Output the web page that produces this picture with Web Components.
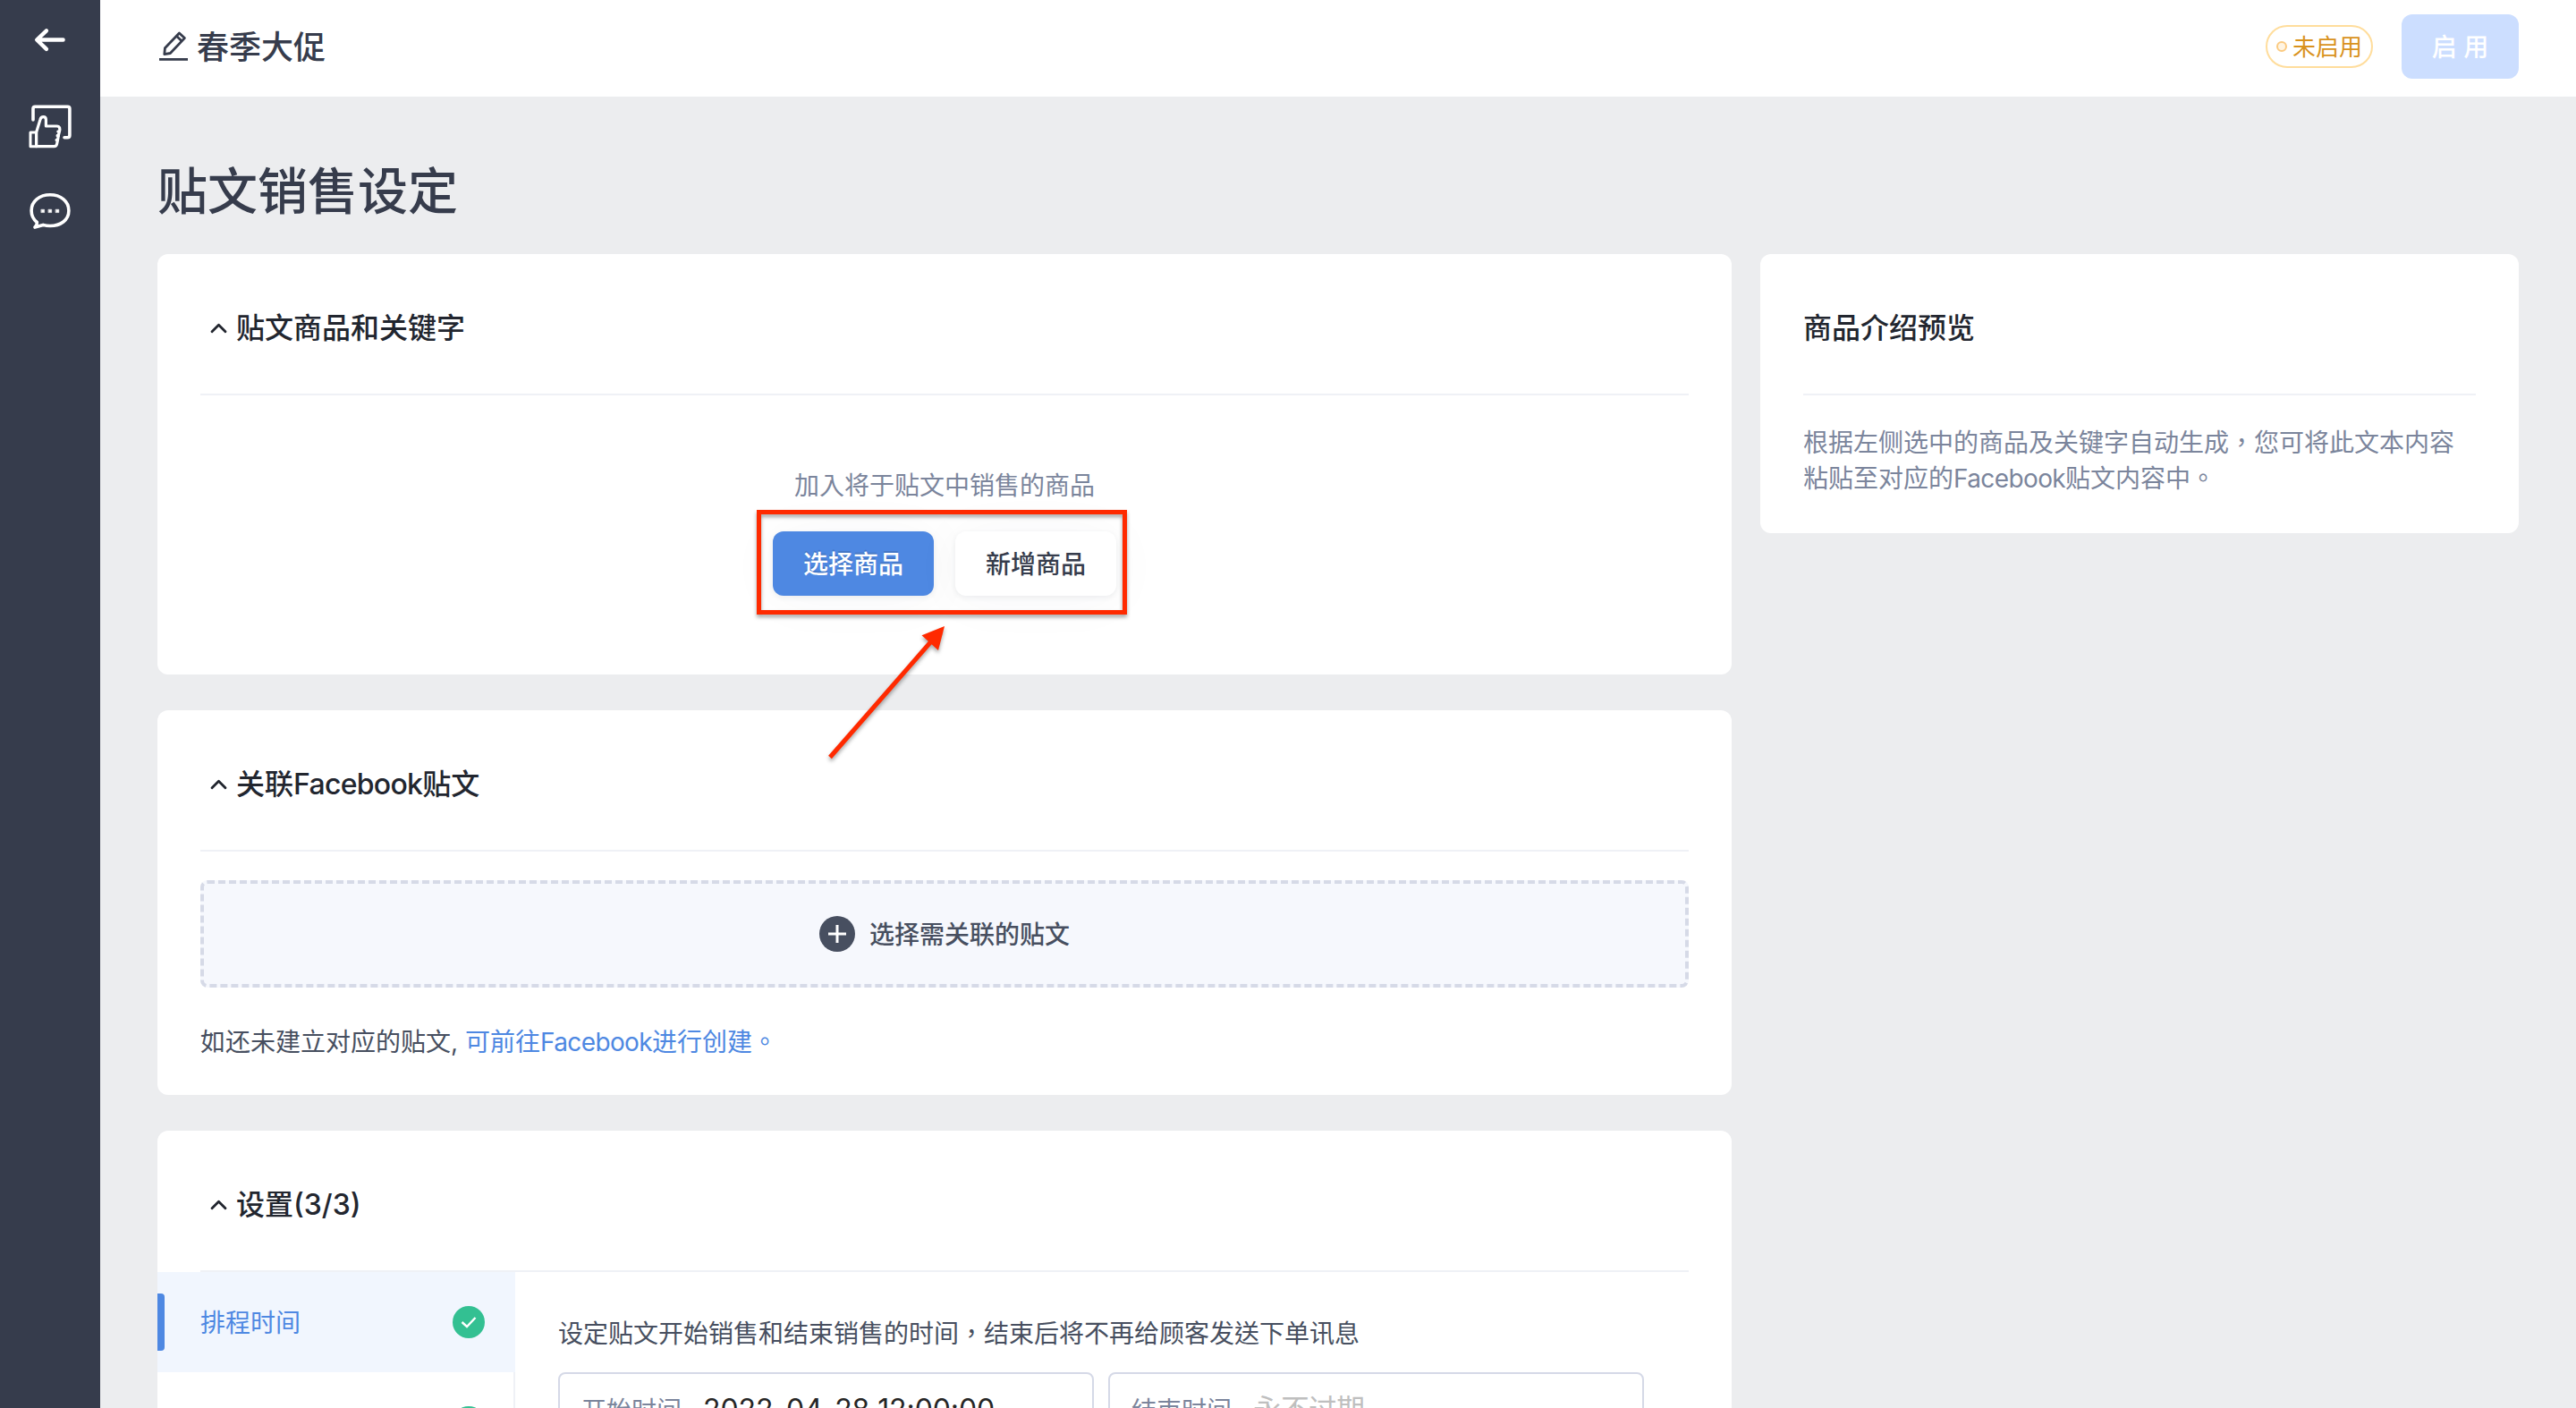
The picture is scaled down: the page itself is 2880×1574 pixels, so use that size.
<!DOCTYPE html>
<html lang="zh-Hant-TW">
<head>
<meta charset="utf-8">
<title>贴文销售设定</title>
<style>
  html, body {
    margin: 0;
    height: 100%;
    overflow: hidden;
  }

  body {
    font-family: Inter, "Noto Sans CJK TC", "Noto Sans CJK SC", sans-serif;
    font-size: 28px;
    line-height: 40px;
    color: #474f60;
    background: #ecedef;
  }
</style>
</head>
<body>
<sales-page>
  <side-bar slot="side"></side-bar>
  <top-bar slot="top" name="春季大促">
    <status-pill>未启用</status-pill>
    <app-button kind="disabled">启 用</app-button>
  </top-bar>
  <page-title>贴文销售设定</page-title>

  <panel-card collapsible style="height: 470px">
    <span slot="heading">贴文商品和关键字</span>
    <empty-products>
      加入将于贴文中销售的商品
      <app-button slot="actions" kind="primary">选择商品</app-button>
      <app-button slot="actions">新增商品</app-button>
    </empty-products>
  </panel-card>

  <panel-card collapsible style="height: 430px">
    <span slot="heading">关联<latin-text>Facebook</latin-text>贴文</span>
    <post-picker>
      选择需关联的贴文
      <span slot="hint">如还未建立对应的贴文,</span>
      <span slot="link">可前往<latin-text>Facebook</latin-text>进行创建。</span>
    </post-picker>
  </panel-card>

  <panel-card collapsible style="height: 560px">
    <span slot="heading">设置(3/3)</span>
    <settings-layout>
      <settings-tab slot="tabs" active>排程时间</settings-tab>
      <settings-tab slot="tabs"></settings-tab>
      设定贴文开始销售和结束销售的时间，结束后将不再给顾客发送下单讯息
      <time-field slot="fields" label="开始时间">2022-04-28 12:00:00</time-field>
      <time-field slot="fields" label="结束时间" empty>永不过期</time-field>
    </settings-layout>
  </panel-card>

  <panel-card slot="aside" style="height: 312px">
    <span slot="heading">商品介绍预览</span>
    <preview-text>根据左侧选中的商品及关键字自动生成，您可将此文本内容粘贴至对应的<latin-text>Facebook</latin-text>贴文内容中。</preview-text>
  </panel-card>
</sales-page>

<script>
// Attaches an open shadow root filled from a markup string
class BaseElement extends HTMLElement {
  constructor() {
    super();
    const template = document.createElement('template');
    template.innerHTML = this.render();
    this.attachShadow({ mode: 'open' });
    this.shadowRoot.appendChild(template.content.cloneNode(true));
  }
}

class SalesPage extends BaseElement {
  render() {
    return `
      <style>
        :host {
          display: grid;
          grid-template-columns: 112px 1fr;
          grid-template-rows: 108px 1fr;
          width: 2880px;
          height: 1574px;
          overflow: hidden;
        }
        .side { grid-row: 1 / 3; display: grid; }
        .content {
          display: grid;
          grid-template-columns: 1760px 848px;
          column-gap: 32px;
          padding: 0 64px;
          min-height: 0;
        }
        .main, .aside { display: flex; flex-direction: column; gap: 40px; }
        .aside { padding-top: 176px; }
      </style>
      <div class="side"><slot name="side"></slot></div>
      <slot name="top"></slot>
      <div class="content">
        <div class="main"><slot></slot></div>
        <div class="aside"><slot name="aside"></slot></div>
      </div>
    `;
  }
}

// Latin words inside Chinese text, set a little tighter
class LatinText extends BaseElement {
  render() {
    return `
      <style>
        :host { display: inline; letter-spacing: -.022em; }
      </style>
      <slot></slot>
    `.trim().replace(/>\s+</g, '><');
  }
}

class SideBar extends BaseElement {
  render() {
    return `
      <style>
        :host {
          display: flex;
          flex-direction: column;
          align-items: center;
          gap: 44px;
          padding-top: 28px;
          background: #363c4c;
        }
        svg {
          display: block;
          fill: none;
          stroke: #fff;
          stroke-linecap: round;
          stroke-linejoin: round;
        }
      </style>
      <svg width="48" height="40" viewBox="32 28 48 40" stroke-width="4.4">
        <path d="M70.6 44.5H42M51.9 34.3L41.2 44.5L51.9 54.9"/>
      </svg>
      <svg width="56" height="60" viewBox="28 112 56 60" stroke-width="3.6">
        <path d="M37 134V121.5Q37 119.3 39.2 119.3H75.6Q77.9 119.3 77.9 121.5V151.3Q77.9 153.8 75.4 153.8H72"/>
        <path d="M34 148H40.6V163.7H34Z" stroke-width="3"/>
        <path d="M40.6 163.7V148L45 133.5C46 129.7 51.4 129.7 51.4 133.8V141H63.5C67 141 67.3 144 66.4 147.2L65.4 151.2L64.4 157L63.6 161Q63 163.7 60.6 163.7Z" stroke-width="3.2"/>
        <path d="M66 147.3L64.8 147M65.4 151.8L64 151.6M64.5 156.8L63 156.5" stroke-width="3"/>
      </svg>
      <svg width="56" height="60" viewBox="28 216.8 56 60" stroke-width="3.6">
        <path d="M41.3 249.3C37.3 246 35.1 241.5 35.1 236.3C35.1 225.7 44.3 218.6 56 218.6C67.7 218.6 76.9 225.7 76.9 236.3C76.9 246.9 67.7 253.3 56 253.3Q51.8 253.3 48.2 252.2L39 254.9Q41.6 252.3 41.3 249.3Z"/>
        <path d="M46.2 235h3.4v3.4h-3.4zM54.3 235h3.4v3.4h-3.4zM62.4 235h3.4v3.4h-3.4z" fill="#fff" stroke-width=".6"/>
      </svg>
    `;
  }
}

class TopBar extends BaseElement {
  render() {
    return `
      <style>
        :host {
          display: flex;
          align-items: center;
          justify-content: space-between;
          height: 104px;
          padding: 0 64px 4px;
          background: #fff;
        }
        .name {
          display: flex;
          align-items: center;
          gap: 8px;
          font-size: 36px;
          font-weight: 500;
          color: #363c4c;
        }
        .name span { padding-top: 2px; }
        .actions { display: flex; align-items: center; gap: 32px; }
        svg { display: block; fill: none; stroke: #363c4c; stroke-width: 2.8; }
      </style>
      <div class="name">
        <svg width="36" height="40" viewBox="0 0 36 40">
          <path d="M2 34.4H34"/>
          <path d="M7.8 28.6L8.4 21.8L24.4 5L30.4 10.6L14.4 27.5Z" stroke-linejoin="round"/>
          <path d="M21.3 8.3L27.3 13.9"/>
        </svg>
        <span></span>
      </div>
      <div class="actions"><slot></slot></div>
    `;
  }

  connectedCallback() {
    this.shadowRoot.querySelector('span').textContent = this.getAttribute('name');
  }
}

class StatusPill extends BaseElement {
  render() {
    return `
      <style>
        :host {
          display: flex;
          align-items: center;
          gap: 6px;
          box-sizing: border-box;
          width: 120px;
          height: 48px;
          padding-left: 10px;
          border: 2px solid #ffdd9c;
          border-radius: 24px;
          font-size: 26px;
          color: #d9921c;
        }
        i {
          box-sizing: border-box;
          width: 12px;
          height: 12px;
          border: 2px solid #fbca80;
          border-radius: 50%;
          background: #fff4e2;
        }
        span { padding-top: 2px; }
      </style>
      <i></i><span><slot></slot></span>
    `;
  }
}

class AppButton extends BaseElement {
  render() {
    return `
      <style>
        :host {
          display: flex;
          align-items: center;
          justify-content: center;
          box-sizing: border-box;
          width: 180px;
          height: 72px;
          padding-top: 2px;
          border-radius: 12px;
          font-weight: 500;
          color: #363c4c;
          background: #fff;
          box-shadow: 0 2px 6px rgba(54, 60, 76, .08), 0 4px 60px rgba(54, 60, 76, .04);
        }
        :host([kind="primary"]) {
          color: #fff;
          background: #4e88e2;
          text-shadow: 0 -2px 0 rgba(0, 0, 0, .12);
        }
        :host([kind="disabled"]) {
          width: 131px;
          color: #fff;
          background: #ccdeff;
          box-shadow: none;
        }
      </style>
      <slot></slot>
    `;
  }
}

class PageTitle extends BaseElement {
  render() {
    return `
      <style>
        :host {
          display: block;
          height: 80px;
          padding-top: 56px;
          line-height: 100px;
          font-size: 56px;
          font-weight: 500;
          color: #363c4c;
        }
      </style>
      <slot></slot>
    `;
  }
}

class PanelCard extends BaseElement {
  render() {
    return `
      <style>
        :host {
          display: block;
          flex: none;
          box-sizing: border-box;
          padding: 0 48px;
          border-radius: 12px;
          background: #fff;
          overflow: hidden;
        }
        header {
          display: flex;
          align-items: center;
          height: 156px;
          border-bottom: 2px solid #eff1f6;
          font-size: 32px;
          font-weight: 500;
          color: #22262f;
        }
        h2 { margin: 10px 0 0; font: inherit; line-height: 48px; }
        svg { display: none; fill: none; stroke: #22262f; stroke-width: 2.8; stroke-linecap: round; stroke-linejoin: round; }
        :host([collapsible]) svg { display: block; margin: 10px 8px 0 8px; }
      </style>
      <header>
        <svg width="24" height="24" viewBox="0 0 24 24"><path d="M5 15.8L12.5 8.2L20 15.8"/></svg>
        <h2><slot name="heading"></slot></h2>
      </header>
      <slot></slot>
    `;
  }
}

class EmptyProducts extends BaseElement {
  render() {
    return `
      <style>
        :host { display: flex; flex-direction: column; align-items: center; padding-top: 81px; }
        .tip { color: #7b859c; }
        .actions { position: relative; display: flex; gap: 24px; margin-top: 31px; }
        /* red callout drawn over the buttons */
        .frame {
          position: absolute;
          left: -18px;
          top: -24px;
          box-sizing: border-box;
          width: 414px;
          height: 117px;
          border: 5px solid #ff2a00;
          filter: drop-shadow(0 3px 2px rgba(0, 0, 0, .35));
        }
        .arrow {
          position: absolute;
          left: 56px;
          top: 100px;
          filter: drop-shadow(0 3px 2px rgba(0, 0, 0, .35));
        }
      </style>
      <div class="tip"><slot></slot></div>
      <div class="actions">
        <slot name="actions"></slot>
        <div class="frame"></div>
        <svg class="arrow" width="150" height="160" viewBox="920 694 150 160">
          <path d="M928 846.5L1042 716" fill="none" stroke="#ff2a00" stroke-width="5"/>
          <path d="M1056 700L1030.5 710.3L1049 727Z" fill="#ff2a00"/>
        </svg>
      </div>
    `;
  }

  // keep the arrow above the cards that follow
  connectedCallback() {
    this.closest('panel-card').style.cssText += 'overflow: visible; position: relative; z-index: 1';
  }
}

class PostPicker extends BaseElement {
  render() {
    return `
      <style>
        :host { display: block; padding-top: 32px; }
        .box {
          display: flex;
          align-items: center;
          justify-content: center;
          gap: 16px;
          box-sizing: border-box;
          height: 120px;
          border: 4px dashed #d6dae7;
          border-radius: 8px;
          font-weight: 500;
          background: #f6f8fd;
        }
        .box div { padding-top: 2px; }
        .note { margin-top: 41px; white-space: nowrap; }
        .link { color: #4e88e2; }
      </style>
      <div class="box">
        <svg width="40" height="40" viewBox="0 0 40 40">
          <circle cx="20" cy="20" r="20" fill="#474f60"/>
          <path d="M20 10V30M10 20H30" stroke="#fff" stroke-width="3"/>
        </svg>
        <div><slot></slot></div>
      </div>
      <div class="note"><slot name="hint"></slot> <span class="link"><slot name="link"></slot></span></div>
    `;
  }
}

class SettingsLayout extends BaseElement {
  render() {
    return `
      <style>
        :host { display: grid; grid-template-columns: 400px 1fr; margin: 0 -48px; height: 400px; }
        .tabs { box-sizing: border-box; border-right: 2px solid #eff1f6; }
        .body { padding: 49px 48px 0; white-space: nowrap; }
        .fields { display: flex; gap: 16.5px; margin-top: 23px; }
      </style>
      <div class="tabs"><slot name="tabs"></slot></div>
      <div class="body">
        <slot></slot>
        <div class="fields"><slot name="fields"></slot></div>
      </div>
    `;
  }
}

class SettingsTab extends BaseElement {
  render() {
    return `
      <style>
        :host {
          display: flex;
          align-items: center;
          justify-content: space-between;
          box-sizing: border-box;
          width: 398px;
          height: 112px;
          padding-right: 32px;
        }
        .mark { width: 8px; height: 64px; margin-right: 40px; border-radius: 0 4px 4px 0; }
        .label { flex: 1; padding-top: 2px; }
        :host([active]) { width: 400px; padding-right: 34px; color: #4e88e2; background: #f1f6fe; }
        :host([active]) .mark { background: #4e88e2; }
      </style>
      <div class="mark"></div>
      <div class="label"><slot></slot></div>
      <svg width="36" height="36" viewBox="0 0 36 36">
        <circle cx="18" cy="18" r="18" fill="#33c092"/>
        <path d="M10.5 18L16 23L25.5 13" fill="none" stroke="#fff" stroke-width="2.4"/>
      </svg>
    `;
  }
}

class TimeField extends BaseElement {
  render() {
    return `
      <style>
        :host {
          display: flex;
          align-items: center;
          box-sizing: border-box;
          width: 598.5px;
          height: 84px;
          padding-left: 24px;
          border: 2px solid #d5d9e7;
          border-radius: 8px;
        }
        label { color: #7b859c; margin-right: 24px; padding-top: 1px; }
        .value { font-size: 32px; letter-spacing: -.1px; color: #262626; }
        :host([empty]) .value { letter-spacing: -1px; color: #bfbfbf; }
      </style>
      <label></label>
      <div class="value"><slot></slot></div>
    `;
  }

  connectedCallback() {
    this.shadowRoot.querySelector('label').textContent = this.getAttribute('label');
  }
}

class PreviewText extends BaseElement {
  render() {
    return `
      <style>
        :host { display: block; padding-top: 33px; color: #7b859c; }
      </style>
      <slot></slot>
    `;
  }
}

customElements.define('sales-page', SalesPage);
customElements.define('latin-text', LatinText);
customElements.define('side-bar', SideBar);
customElements.define('top-bar', TopBar);
customElements.define('status-pill', StatusPill);
customElements.define('app-button', AppButton);
customElements.define('page-title', PageTitle);
customElements.define('panel-card', PanelCard);
customElements.define('empty-products', EmptyProducts);
customElements.define('post-picker', PostPicker);
customElements.define('settings-layout', SettingsLayout);
customElements.define('settings-tab', SettingsTab);
customElements.define('time-field', TimeField);
customElements.define('preview-text', PreviewText);
</script>
</body>
</html>
